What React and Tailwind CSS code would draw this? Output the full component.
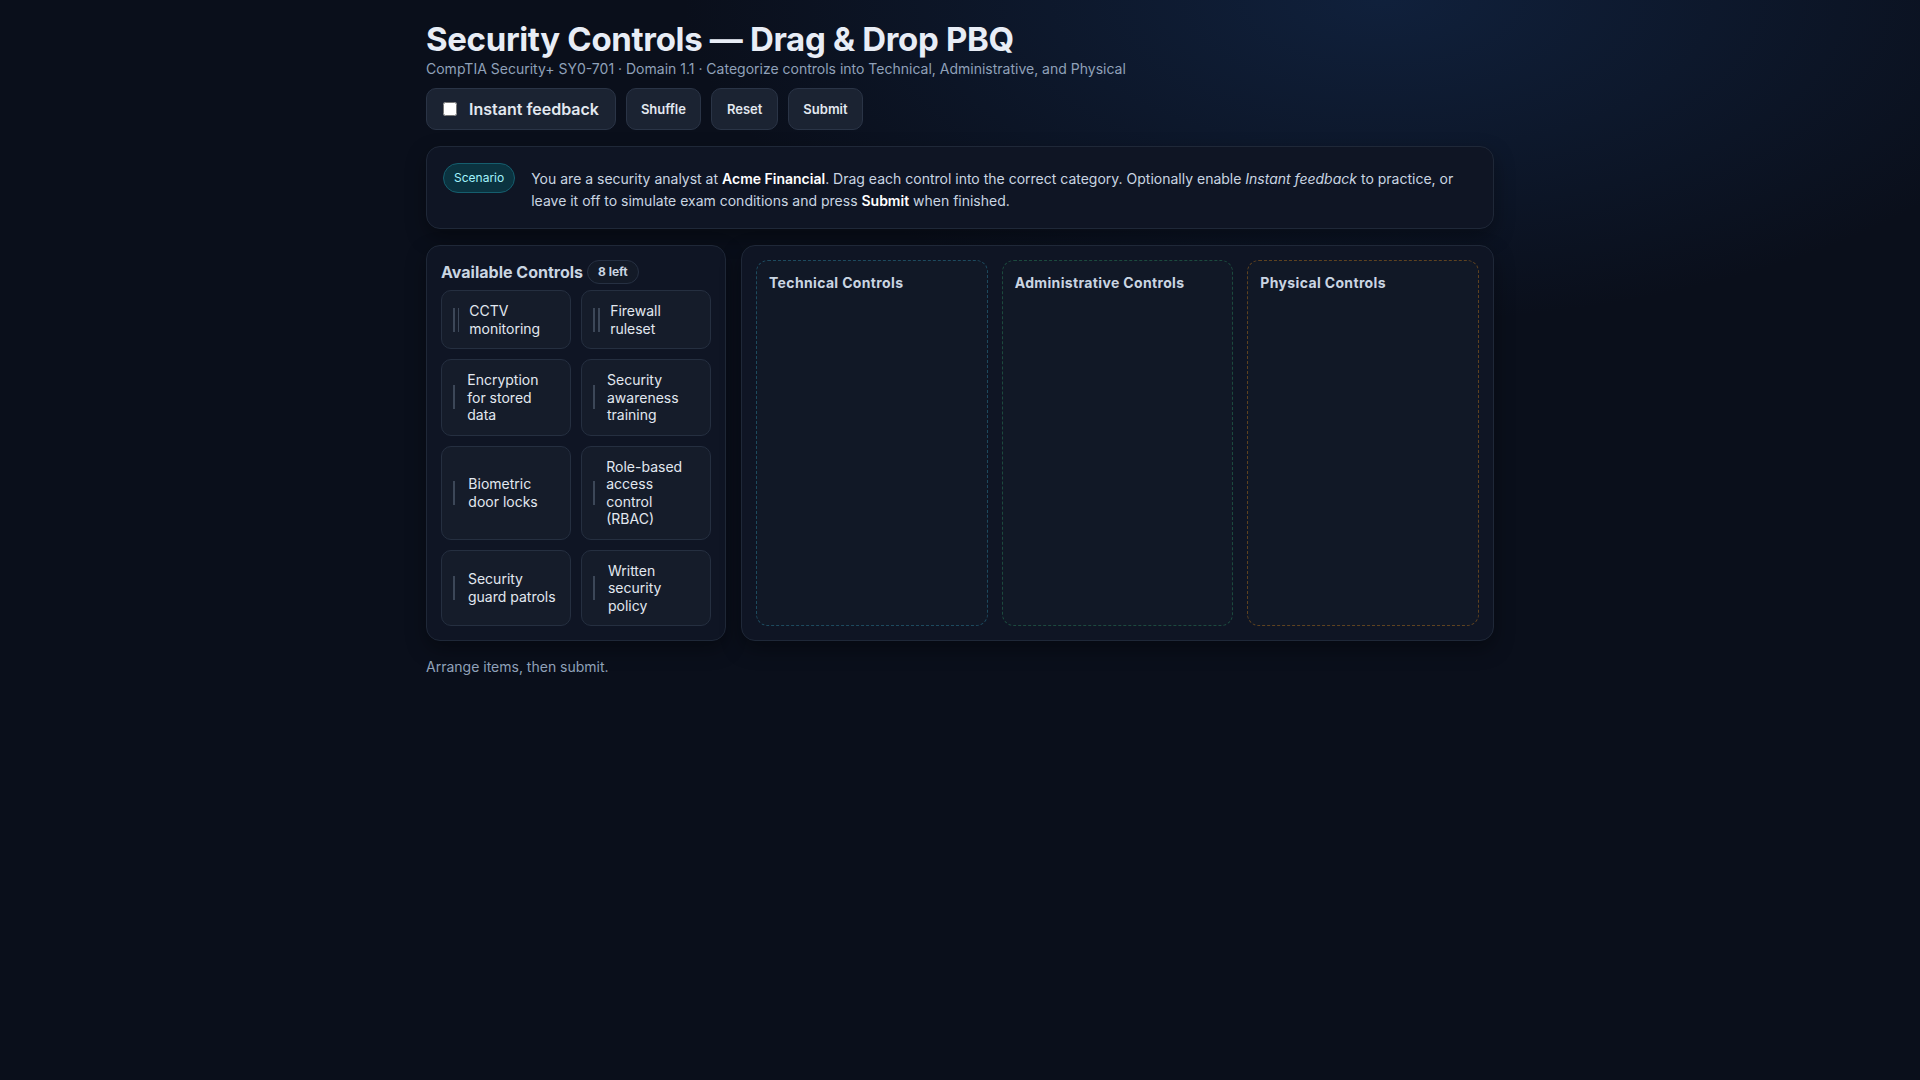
import React, { useState } from "react";

const CONTROLS = [
    { id: "cctv", label: "CCTV monitoring", cat: "physical" },
    { id: "fw", label: "Firewall ruleset", cat: "technical" },
    { id: "enc", label: "Encryption for stored data", cat: "technical" },
    { id: "sat", label: "Security awareness training", cat: "administrative" },
    { id: "bio", label: "Biometric door locks", cat: "physical" },
    { id: "rbac", label: "Role-based access control (RBAC)", cat: "technical" },
    { id: "guard", label: "Security guard patrols", cat: "physical" },
    { id: "policy", label: "Written security policy", cat: "administrative" },
];

const ZONES = [
    { id: "technical", title: "Technical Controls", border: "border-[#1d4a5e]" },
    { id: "administrative", title: "Administrative Controls", border: "border-[#1c4a3e]" },
    { id: "physical", title: "Physical Controls", border: "border-[#5e4220]" },
];

const ControlCard = ({ item, onDragStart }) => (
    <div
        draggable
        onDragStart={(e) => onDragStart(e, item.id)}
        className="flex items-center gap-2.5 rounded-[10px] border border-[#252f40] bg-[#151c2a] px-[11px] py-[11px] text-sm leading-tight text-slate-200 cursor-grab"
    >
        <div className="w-2 h-6 bg-[linear-gradient(90deg,#3c4758_0_2px,transparent_2px_5px,#3c4758_5px_7px,transparent_7px)]" />
        <span>{item.label}</span>
    </div>
);

const App = () => {
    const [pool, setPool] = useState(CONTROLS.map((c) => c.id));
    const [placed, setPlaced] = useState({ technical: [], administrative: [], physical: [] });
    const [instant, setInstant] = useState(false);
    const [status, setStatus] = useState("Arrange items, then submit.");

    const byId = (id) => CONTROLS.find((c) => c.id === id);

    const handleDragStart = (e, id) => {
        e.dataTransfer.setData("text/plain", id);
    };

    const dropTo = (zone, e) => {
        e.preventDefault();
        const id = e.dataTransfer.getData("text/plain");
        if (!id) return;
        setPool((prev) => prev.filter((p) => p !== id));
        setPlaced((prev) => {
            const next = {};
            Object.keys(prev).forEach((k) => (next[k] = prev[k].filter((p) => p !== id)));
            next[zone] = [...next[zone], id];
            return next;
        });
        if (instant) {
            setStatus(byId(id).cat === zone ? "Correct!" : "Not quite — try another category.");
        }
    };

    const shuffle = () => setPool((prev) => [...prev].sort(() => Math.random() - 0.5));

    const reset = () => {
        setPool(CONTROLS.map((c) => c.id));
        setPlaced({ technical: [], administrative: [], physical: [] });
        setStatus("Arrange items, then submit.");
    };

    const submit = () => {
        let score = 0;
        Object.keys(placed).forEach((k) => placed[k].forEach((id) => byId(id).cat === k && score++));
        setStatus(`Score: ${score} / ${CONTROLS.length}`);
    };

    return (
        <div className="min-h-screen bg-[#0a0f1b] bg-[radial-gradient(ellipse_1000px_460px_at_72%_0%,rgba(24,56,104,0.42),transparent_70%)] font-['Inter','Noto_Sans',sans-serif] text-slate-200">
            <div className="max-w-[1100px] mx-auto px-4 pt-[19px] pb-10">
                <h1 className="text-[33px] leading-[40px] font-bold tracking-[-0.01em] text-[#e8edf6]">
                    Security Controls — Drag &amp; Drop PBQ
                </h1>
                <p className="text-sm leading-5 text-slate-400">
                    CompTIA Security+ SY0-701 · Domain 1.1 · Categorize controls into Technical, Administrative, and Physical
                </p>

                <div className="mt-[9px] flex gap-2.5">
                    <label className="flex items-center gap-3 rounded-[10px] border border-[#2a3446] bg-[#1b2332] px-4 text-base font-semibold text-slate-200 cursor-pointer">
                        <input
                            type="checkbox"
                            checked={instant}
                            onChange={(e) => setInstant(e.target.checked)}
                            className="w-3.5 h-3.5"
                        />
                        Instant feedback
                    </label>
                    <button onClick={shuffle} className="rounded-[10px] border border-[#2a3446] bg-[#1b2332] px-3.5 py-2.5 text-[13px] leading-5 font-semibold text-slate-200">
                        Shuffle
                    </button>
                    <button onClick={reset} className="rounded-[10px] border border-[#2a3446] bg-[#1b2332] px-[15px] py-2.5 text-[13px] leading-5 font-semibold text-slate-200">
                        Reset
                    </button>
                    <button onClick={submit} className="rounded-[10px] border border-[#2a3446] bg-[#1b2332] px-3.5 py-2.5 text-[13px] leading-5 font-semibold text-slate-200">
                        Submit
                    </button>
                </div>

                <section className="mt-4 flex items-start gap-4 rounded-[14px] border border-[#1f2838] bg-[#0f1524] p-4 shadow-[0_8px_20px_rgba(0,0,0,0.35)]">
                    <span className="shrink-0 rounded-full border border-[#155e6e] bg-[#0b3340] px-2.5 py-1.5 text-xs leading-4 text-cyan-200">
                        Scenario
                    </span>
                    <p className="mt-[5px] text-sm leading-[22px] text-slate-300">
                        You are a security analyst at <b className="font-semibold text-white">Acme Financial</b>. Drag each control into the correct category. Optionally enable <i>Instant feedback</i> to practice, or leave it off to simulate exam conditions and press <b className="font-semibold text-white">Submit</b> when finished.
                    </p>
                </section>

                <div className="mt-4 grid grid-cols-[300px_1fr] gap-[15px]">
                    <div
                        onDragOver={(e) => e.preventDefault()}
                        onDrop={(e) => {
                            e.preventDefault();
                            const id = e.dataTransfer.getData("text/plain");
                            if (!id || pool.includes(id)) return;
                            setPlaced((prev) => {
                                const next = {};
                                Object.keys(prev).forEach((k) => (next[k] = prev[k].filter((p) => p !== id)));
                                return next;
                            });
                            setPool((prev) => [...prev, id]);
                        }}
                        className="rounded-[14px] border border-[#1f2838] bg-[#0f1524] p-[14px] shadow-[0_8px_20px_rgba(0,0,0,0.35)]"
                    >
                        <div className="flex items-center gap-1 mb-1.5">
                            <h2 className="text-base font-bold text-slate-300">Available Controls</h2>
                            <span className="flex h-6 items-center rounded-full border border-[#263042] bg-[#131a27] px-2.5 text-xs font-bold text-slate-300">
                                {pool.length} left
                            </span>
                        </div>
                        <div className="grid grid-cols-2 gap-2.5">
                            {pool.map((id) => (
                                <ControlCard key={id} item={byId(id)} onDragStart={handleDragStart} />
                            ))}
                        </div>
                    </div>

                    <div className="grid grid-cols-3 gap-3.5 rounded-[14px] border border-[#1f2838] bg-[#0f1524] p-[14px] shadow-[0_8px_20px_rgba(0,0,0,0.35)]">
                        {ZONES.map((zone) => (
                            <div
                                key={zone.id}
                                onDragOver={(e) => e.preventDefault()}
                                onDrop={(e) => dropTo(zone.id, e)}
                                className={`flex flex-col gap-2 rounded-xl border border-dashed ${zone.border} bg-[#111826] p-3`}
                            >
                                <h3 className="text-sm font-bold tracking-wide text-slate-300">{zone.title}</h3>
                                {placed[zone.id].map((id) => (
                                    <ControlCard key={id} item={byId(id)} onDragStart={handleDragStart} />
                                ))}
                            </div>
                        ))}
                    </div>
                </div>

                <p className="mt-4 text-sm leading-5 text-slate-400">{status}</p>
            </div>
        </div>
    );
};

export default App;
